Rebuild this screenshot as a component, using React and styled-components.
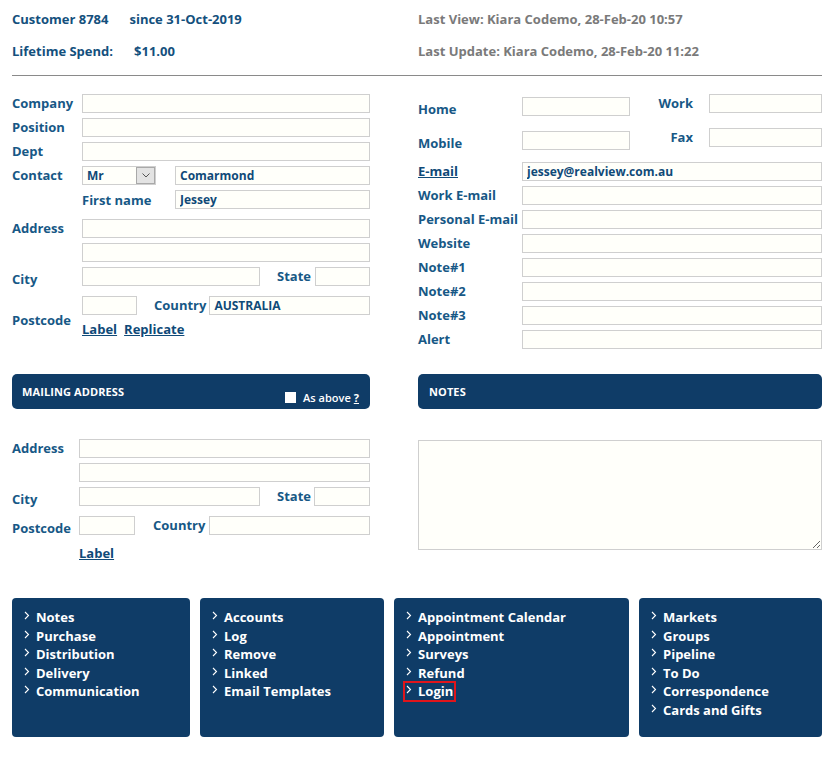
import React from "react";
import styled, { createGlobalStyle } from "styled-components";

const GlobalStyle = createGlobalStyle`
  body {
    margin: 0;
    background: #fff;
    font-family: "Open Sans", "Liberation Sans", sans-serif;
  }
  * { box-sizing: border-box; }
`;

const BLUE = "#175886";
const LINK = "#0f4a78";
const NAVY = "#0f3c67";

const Page = styled.div`
  width: 840px;
  padding: 10px 18px 20px 12px;
`;

const TwoCol = styled.div`
  display: grid;
  grid-template-columns: 358px 404px;
  column-gap: 48px;
  align-items: start;
  margin-top: ${(p) => p.top || 0}px;
`;

const InfoBlock = styled.div`
  display: flex;
  flex-direction: column;
  gap: 14px;
`;

const InfoLine = styled.div`
  font-size: 13px;
  font-weight: 700;
  line-height: 18px;
  color: ${(p) => (p.muted ? "#7a7a7a" : "#14507d")};
  white-space: nowrap;
  span + span {
    margin-left: 21px;
  }
`;

const Rule = styled.hr`
  border: none;
  border-top: 1px solid #8a8a8a;
  margin: 15px 0 18px;
  width: 810px;
`;

const FormGrid = styled.div`
  display: grid;
  grid-template-columns: ${(p) => p.labelWidth}px minmax(0, 1fr);
  row-gap: 5px;
  align-items: start;
  align-content: start;
  margin-top: ${(p) => p.top || 0}px;
`;

const Label = styled.div`
  height: 19px;
  font-size: 13px;
  font-weight: 700;
  line-height: 19px;
  color: ${BLUE};
  white-space: nowrap;
  overflow: visible;
  grid-row: ${(p) => (p.span ? `span ${p.span}` : "auto")};
  align-self: ${(p) => (p.span ? "center" : "start")};
  padding-top: ${(p) => p.shift || 0}px;
  padding-left: ${(p) => p.indent || 0}px;
  padding-right: ${(p) => p.trail || 0}px;
  text-align: ${(p) => (p.right ? "right" : "left")};
  width: ${(p) => (p.w ? `${p.w}px` : "auto")};
  flex: none;
`;

const LinkLabel = styled.a`
  display: block;
  height: 19px;
  font-size: 13px;
  font-weight: 700;
  line-height: 19px;
  color: ${LINK};
  text-decoration: underline;
  cursor: pointer;
  white-space: nowrap;
`;

const Spacer = styled.div`
  grid-column: span 2;
  height: 0;
`;

const Field = styled.div`
  display: flex;
  align-items: flex-start;
  gap: ${(p) => p.gap || 0}px;
  height: 19px;
  min-width: 0;
`;

const Input = styled.input`
  display: block;
  height: 19px;
  width: ${(p) => (p.w ? `${p.w}px` : "100%")};
  flex: ${(p) => (p.w ? "none" : "1 1 0")};
  min-width: 0;
  border: 1px solid #cfcfcf;
  background: #fffffa;
  padding: 0 4px;
  font-family: inherit;
  font-size: 12px;
  font-weight: 700;
  color: ${LINK};
  outline: none;
  margin: 0;
  margin-top: ${(p) => p.shift || 0}px;
`;

const SelectBox = styled.div`
  display: flex;
  width: 74px;
  height: 19px;
  border: 1px solid #cfcfcf;
  background: #fffffa;
  flex: none;
`;

const SelectText = styled.div`
  flex: 1;
  padding-left: 4px;
  font-size: 12px;
  font-weight: 700;
  line-height: 17px;
  color: ${LINK};
`;

const SelectButton = styled.div`
  width: 19px;
  height: 17px;
  background: #e3e3e3;
  border: 1px solid #a9a9a9;
  display: flex;
  align-items: center;
  justify-content: center;
`;

const LinkRow = styled.div`
  display: flex;
  gap: 7px;
  height: 19px;
  padding-top: ${(p) => p.shift || 0}px;
`;

const PhoneGrid = styled.div`
  display: grid;
  grid-template-columns: 104px 108px minmax(0, 1fr) 113px;
  grid-template-rows: 19px 19px;
  row-gap: 15px;
  align-items: start;
`;

const Header = styled.div`
  height: 35px;
  border-radius: 5px;
  background: ${NAVY};
  display: flex;
  justify-content: space-between;
  padding: 0 10px 0 ${(p) => p.pad || 10}px;
`;

const HeaderTitle = styled.div`
  color: #fff;
  font-size: 11px;
  font-weight: 700;
  line-height: 35px;
  letter-spacing: 0.1px;
`;

const HeaderOption = styled.label`
  display: flex;
  align-items: center;
  gap: 7px;
  color: #fff;
  font-size: 11px;
  font-weight: 600;
  padding-top: 11px;
  height: 35px;
  margin-right: 1px;
`;

const Check = styled.span`
  width: 11px;
  height: 11px;
  background: #fff;
  display: inline-block;
`;

const Help = styled.span`
  text-decoration: underline;
  font-weight: 700;
  margin-left: 3px;
`;

const NotesArea = styled.textarea`
  display: block;
  width: 100%;
  height: 110px;
  margin-top: 31px;
  border: 1px solid #cfcfcf;
  background: #fffffa;
  resize: vertical;
  outline: none;
`;

const MenuGrid = styled.div`
  display: grid;
  grid-template-columns: 178px 184px 235px 183px;
  column-gap: 10px;
  margin-top: ${(p) => p.top}px;
`;

const MenuBox = styled.div`
  background: ${NAVY};
  border-radius: 4px;
  height: 139px;
  padding: 10px 8px 0 10px;
`;

const MenuItem = styled.div`
  display: flex;
  align-items: flex-start;
  gap: 6px;
  width: fit-content;
  padding: 0 2px;
  height: 18.6px;
  color: #fff;
  font-size: 13px;
  font-weight: 700;
  line-height: 18px;
  white-space: nowrap;
  outline: ${(p) => (p.marked ? "2px solid #e0151b" : "none")};
  outline-offset: -1px;
  svg {
    margin-top: 3px;
    flex: none;
  }
`;

const Chevron = () => (
  <svg width="6" height="9" viewBox="0 0 6 9">
    <path d="M1 1 L4.5 4.5 L1 8" fill="none" stroke="#fff" strokeWidth="1.1" />
  </svg>
);

const menus = [
  ["Notes", "Purchase", "Distribution", "Delivery", "Communication"],
  ["Accounts", "Log", "Remove", "Linked", "Email Templates"],
  ["Appointment Calendar", "Appointment", "Surveys", "Refund", "Login"],
  ["Markets", "Groups", "Pipeline", "To Do", "Correspondence", "Cards and Gifts"],
];

const contactRows = ["E-mail", "Work E-mail", "Personal E-mail", "Website", "Note#1", "Note#2", "Note#3", "Alert"];

export default function App() {
  return (
    <Page>
      <GlobalStyle />
      <TwoCol>
        <InfoBlock>
          <InfoLine>
            <span>Customer 8784</span>
            <span>since 31-Oct-2019</span>
          </InfoLine>
          <InfoLine>
            <span>Lifetime Spend:</span>
            <span>$11.00</span>
          </InfoLine>
        </InfoBlock>
        <InfoBlock>
          <InfoLine muted>Last View: Kiara Codemo, 28-Feb-20 10:57</InfoLine>
          <InfoLine muted>Last Update: Kiara Codemo, 28-Feb-20 11:22</InfoLine>
        </InfoBlock>
      </TwoCol>
      <Rule />

      <TwoCol>
        <FormGrid labelWidth={70}>
          <Label>Company</Label>
          <Input />
          <Label>Position</Label>
          <Input />
          <Label>Dept</Label>
          <Input />
          <Label>Contact</Label>
          <Field gap={19}>
            <SelectBox>
              <SelectText>Mr</SelectText>
              <SelectButton>
                <svg width="8" height="5" viewBox="0 0 8 5">
                  <path d="M0.5 0.5 L4 4 L7.5 0.5" fill="none" stroke="#555" strokeWidth="1" />
                </svg>
              </SelectButton>
            </SelectBox>
            <Input defaultValue="Comarmond" />
          </Field>
          <div />
          <Field>
            <Label w={93} shift={1}>First name</Label>
            <Input defaultValue="Jessey" />
          </Field>
          <Spacer />
          <Label>Address</Label>
          <Input />
          <div />
          <Input />
          <Label shift={3}>City</Label>
          <Field>
            <Input />
            <Label indent={17} trail={4}>State</Label>
            <Input w={55} />
          </Field>
          <Spacer />
          <Label span={2} shift={3}>Postcode</Label>
          <Field>
            <Input w={55} />
            <Label indent={17} trail={3}>Country</Label>
            <Input defaultValue="AUSTRALIA" />
          </Field>
          <LinkRow shift={0}>
            <LinkLabel>Label</LinkLabel>
            <LinkLabel>Replicate</LinkLabel>
          </LinkRow>
        </FormGrid>

        <div>
          <PhoneGrid>
            <Label shift={6}>Home</Label>
            <Input shift={3} />
            <Label right trail={16}>Work</Label>
            <Input />
            <Label shift={6}>Mobile</Label>
            <Input shift={3} />
            <Label right trail={16}>Fax</Label>
            <Input />
          </PhoneGrid>
          <FormGrid labelWidth={104} top={15}>
            {contactRows.map((r) =>
              r === "E-mail" ? (
                <React.Fragment key={r}>
                  <LinkLabel>E-mail</LinkLabel>
                  <Input defaultValue="jessey@realview.com.au" />
                </React.Fragment>
              ) : (
                <React.Fragment key={r}>
                  <Label>{r}</Label>
                  <Input />
                </React.Fragment>
              )
            )}
          </FormGrid>
        </div>
      </TwoCol>

      <TwoCol top={25}>
        <div>
          <Header>
            <HeaderTitle>MAILING ADDRESS</HeaderTitle>
            <HeaderOption>
              <Check />
              <span>
                As above<Help>?</Help>
              </span>
            </HeaderOption>
          </Header>
          <FormGrid labelWidth={67} top={30}>
            <Label>Address</Label>
            <Input />
            <div />
            <Input />
            <Label shift={3}>City</Label>
            <Field>
              <Input />
              <Label indent={17} trail={3}>State</Label>
              <Input w={56} />
            </Field>
            <Spacer />
            <Label shift={3}>Postcode</Label>
            <Field>
              <Input w={56} />
              <Label indent={18} trail={4}>Country</Label>
              <Input />
            </Field>
            <div />
            <LinkRow shift={4}>
              <LinkLabel>Label</LinkLabel>
            </LinkRow>
          </FormGrid>
        </div>
        <div>
          <Header pad={11}>
            <HeaderTitle>NOTES</HeaderTitle>
          </Header>
          <NotesArea />
        </div>
      </TwoCol>

      <MenuGrid top={39}>
        {menus.map((items, i) => (
          <MenuBox key={i}>
            {items.map((it) => (
              <MenuItem key={it} marked={it === "Login"}>
                <Chevron />
                {it}
              </MenuItem>
            ))}
          </MenuBox>
        ))}
      </MenuGrid>
    </Page>
  );
}
